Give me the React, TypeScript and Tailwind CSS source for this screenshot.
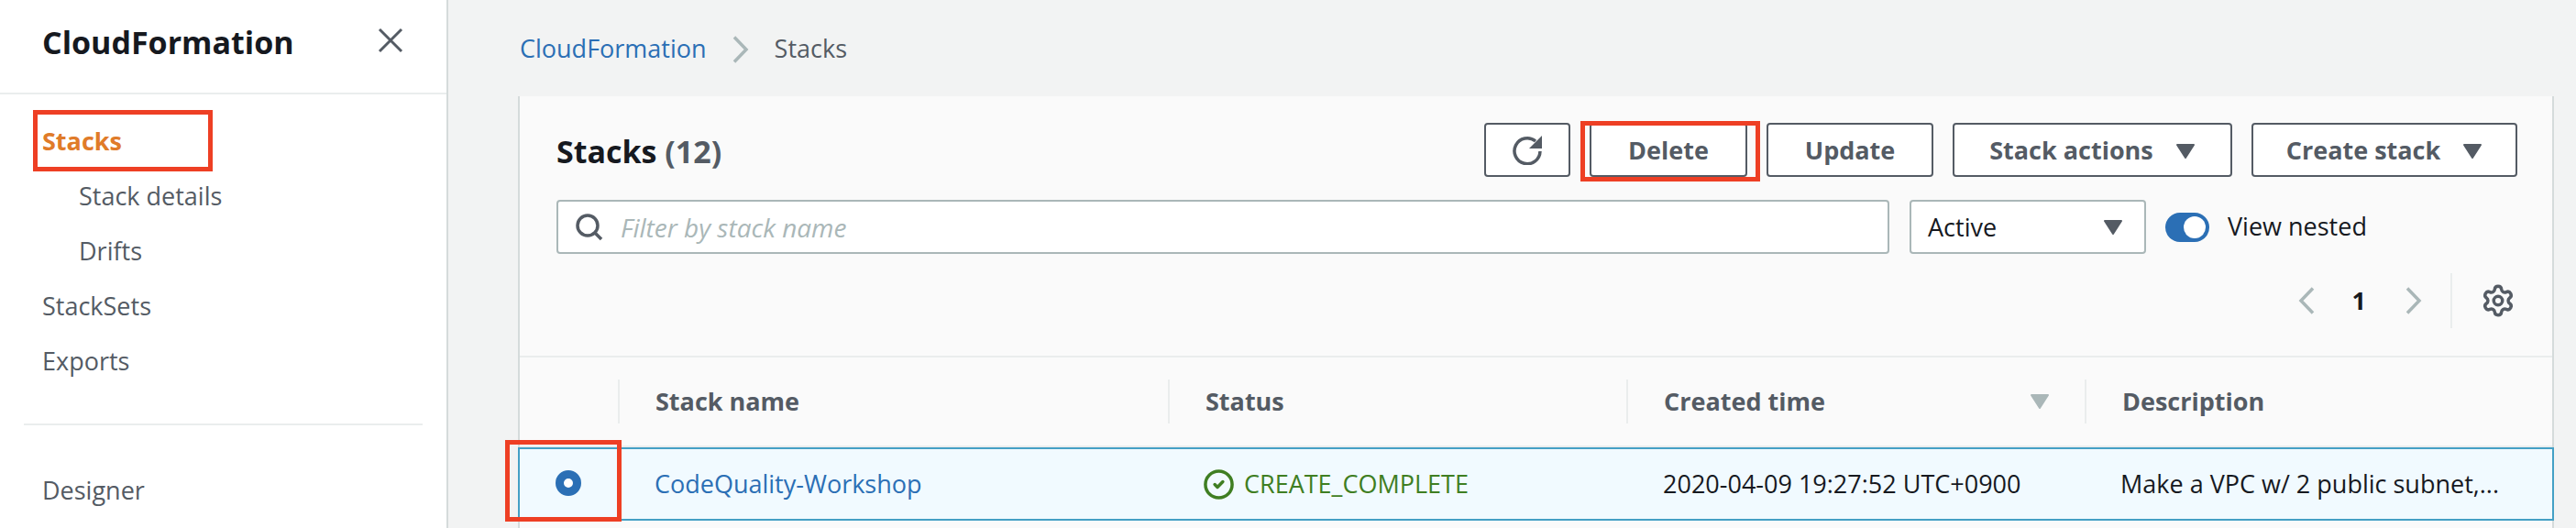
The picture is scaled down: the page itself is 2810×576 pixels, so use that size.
import { CircleCheck, Settings } from "lucide-react"

const font = "font-['Open_Sans','Noto_Sans',sans-serif]"

function Caret({ color = "#545b64", className = "" }: { color?: string; className?: string }) {
  return (
    <svg viewBox="0 0 22 18" className={"w-[22px] h-[18px] " + className}>
      <path d="M2 2h18l-9 14z" fill={color} stroke={color} strokeWidth="2" strokeLinejoin="round" />
    </svg>
  )
}

function Chevron({ left = false, className = "" }: { left?: boolean; className?: string }) {
  return (
    <svg viewBox="0 0 18 30" className={"w-[18px] h-[30px] " + className}>
      <path d={left ? "M16 1.5L3 15l13 13.5" : "M2 1.5L15 15 2 28.5"} fill="none" stroke="#aab7b8" strokeWidth="3.5" />
    </svg>
  )
}

function Button({ label, caret, className = "" }: { label: string; caret?: boolean; className?: string }) {
  return (
    <button className={"h-[59px] pt-[2px] flex items-center justify-center gap-[24px] bg-white border-2 border-[#545b64] rounded-[4px] text-[27px] font-bold text-[#545b64] " + className}>
      {label}
      {caret && <Caret />}
    </button>
  )
}

function NavItem({ label, sub, active }: { label: string; sub?: boolean; active?: boolean }) {
  return (
    <div className={"h-[60px] flex items-center text-[27px] " + (sub ? "pl-[86px] " : "pl-[46px] ") + (active ? "font-bold text-[#e07b29]" : "text-[#545b64]")}>
      {label}
    </div>
  )
}

function Th({ label, children }: { label: string; children?: React.ReactNode }) {
  return (
    <div className="h-[48px] flex items-center justify-between border-l-2 border-[#eaeded] pl-[39px] pr-[38px] text-[27px] font-bold text-[#545b64]">
      {label}
      {children}
    </div>
  )
}

export default function App() {
  return (
    <div className={"relative h-[576px] w-[2810px] overflow-hidden flex bg-[#f2f3f3] " + font}>
      {/* sidebar */}
      <aside className="w-[489px] shrink-0 bg-white border-r-2 border-[#d5dbdb]">
        <div className="h-[103px] border-b-2 border-[#eaeded] flex items-start justify-between pl-[46px] pr-[47px] pt-[21px]">
          <span className="text-[34px] font-bold text-[#16191f] leading-[50px]">CloudFormation</span>
          <svg viewBox="0 0 28 28" className="w-[28px] h-[28px] mt-[9px]">
            <path d="M2 2l24 24M26 2L2 26" fill="none" stroke="#545b64" strokeWidth="3" />
          </svg>
        </div>
        <nav className="pt-[21px]">
          <NavItem label="Stacks" active />
          <NavItem label="Stack details" sub />
          <NavItem label="Drifts" sub />
          <NavItem label="StackSets" />
          <NavItem label="Exports" />
        </nav>
        <div className="mx-[26px] mt-[38px] border-t-2 border-[#eaeded]" />
        <div className="mt-[41px]">
          <NavItem label="Designer" />
        </div>
      </aside>

      {/* main */}
      <main className="flex-1 min-w-0 pl-[76px] pr-[24px]">
        <div className="h-[105px] pl-[2px] pt-[2px] flex items-center text-[27px]">
          <span className="text-[#2b6fb5]">CloudFormation</span>
          <Chevron className="ml-[28px] mr-[28px]" />
          <span className="text-[#545b64]">Stacks</span>
        </div>

        <section className="bg-[#fafafa] border-l-2 border-r-2 border-[#d5dbdb] h-[471px]">
          <div className="pl-[40px] pr-[38px] pt-[29px]">
            <div className="flex items-center justify-between">
              <h1 className="text-[34px] font-bold text-[#16191f] pt-[3px]">
                Stacks <span className="text-[#545b64]">(12)</span>
              </h1>
              <div className="flex gap-[21px]">
                <button className="w-[94px] h-[59px] flex items-center justify-center bg-white border-2 border-[#545b64] rounded-[4px]">
                  <svg viewBox="0 0 32 32" className="w-[32px] h-[32px]">
                    <path d="M30 17A14 14 0 1 1 25 6" fill="none" stroke="#545b64" strokeWidth="3.5" />
                    <path d="M32 0v14H18z" fill="#545b64" />
                  </svg>
                </button>
                <Button label="Delete" className="w-[172px]" />
                <Button label="Update" className="w-[182px]" />
                <Button label="Stack actions" caret className="w-[305px]" />
                <Button label="Create stack" caret className="w-[290px]" />
              </div>
            </div>

            <div className="mt-[25px] flex items-center">
              <div className="w-[1454px] h-[59px] flex items-center gap-[19px] pl-[19px] bg-white border-2 border-[#aab7b8] rounded-[4px]">
                <svg viewBox="0 0 30 30" className="w-[30px] h-[30px]">
                  <circle cx="13" cy="13" r="11" fill="none" stroke="#545b64" strokeWidth="3.5" />
                  <path d="M20 20l8 8" fill="none" stroke="#545b64" strokeWidth="3.5" />
                </svg>
                <span className="text-[28px] italic text-[#aab7b8]">Filter by stack name</span>
              </div>
              <div className="ml-[22px] w-[258px] h-[59px] flex items-center justify-between pl-[18px] pr-[23px] bg-white border-2 border-[#aab7b8] rounded-[4px] text-[27px] text-[#16191f]">
                <span className="pt-[1px]">Active</span>
                <Caret />
              </div>
              <div className="ml-[21px] w-[48px] h-[32px] rounded-full bg-[#2b6fb5] flex items-center justify-end pr-[4px]">
                <div className="w-[24px] h-[24px] rounded-full bg-white" />
              </div>
              <span className="ml-[20px] text-[27px] text-[#16191f]">View nested</span>
            </div>

            <div className="mt-[21px] h-[60px] flex items-center justify-end">
              <Chevron left />
              <span className="ml-[41px] mr-[43px] text-[27px] font-bold text-[#16191f]">1</span>
              <Chevron />
              <div className="ml-[31px] h-[60px] border-l-2 border-[#eaeded]" />
              <Settings className="ml-[31px] mr-[2px] w-[38px] h-[38px] text-[#545b64]" strokeWidth={2.2} />
            </div>
          </div>

          <div className="mt-[30px] border-t-2 border-[#eaeded] h-[100px] border-b-2 grid grid-cols-[107px_600px_500px_500px_1fr] items-center">
            <div />
            <Th label="Stack name" />
            <Th label="Status" />
            <Th label="Created time">
              <Caret color="#aab7b8" />
            </Th>
            <Th label="Description" />
          </div>

          <div className="h-[80px] -mx-[2px] border-2 border-[#44a0c5] bg-[#f1faff] grid grid-cols-[109px_600px_500px_500px_1fr] items-center text-[27px]">
            <div className="flex justify-center mb-[3px] pr-[3px]">
              <div className="w-[28px] h-[28px] rounded-full border-[9px] border-[#2b6fb5] bg-white" />
            </div>
            <div className="pl-[38px] text-[#2b6fb5]">CodeQuality-Workshop</div>
            <div className="pl-[36px] flex items-center gap-[10px] text-[#3f7e22]">
              <CircleCheck className="w-[35px] h-[35px]" strokeWidth={2.4} />
              CREATE_COMPLETE
            </div>
            <div className="pl-[38px] text-[#16191f] whitespace-nowrap">2020-04-09 19:27:52 UTC+0900</div>
            <div className="pl-[37px] text-[#16191f] whitespace-nowrap">Make a VPC w/ 2 public subnet,...</div>
          </div>
        </section>
      </main>

      {/* red annotation boxes */}
      <div className="absolute left-[36px] top-[120px] w-[196px] h-[67px] border-[5px] border-[#ee3f24]" />
      <div className="absolute left-[1724px] top-[132px] w-[196px] h-[66px] border-[5px] border-[#ee3f24]" />
      <div className="absolute left-[551px] top-[480px] w-[127px] h-[89px] border-[5px] border-[#ee3f24]" />
    </div>
  )
}
